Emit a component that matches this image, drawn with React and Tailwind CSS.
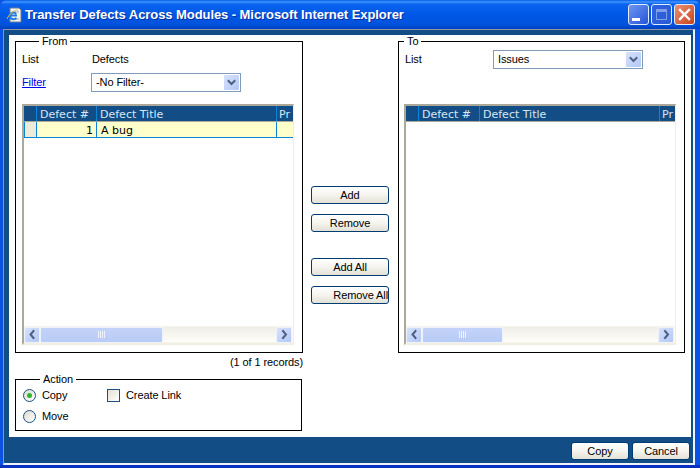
const body = "font-['Liberation_Sans',Arial,sans-serif] text-[11px] leading-[13px] text-black tracking-[-0.1px]";
const mono = "font-['DejaVu_Sans',Verdana,sans-serif] text-[11px] leading-[13px]";

function Chevron({ dir = "down" }) {
  const d = dir === "down" ? "M2.5 4 L5.5 7 L8.5 4" : dir === "left" ? "M6.5 2 L3.5 5.5 L6.5 9" : "M4 2 L7 5.5 L4 9";
  return (
    <svg width="11" height="11" viewBox="0 0 11 11" fill="none">
      <path d={d} stroke="#4d6185" strokeWidth="2" strokeLinecap="square" />
    </svg>
  );
}

function ScrollBtn({ dir }) {
  return (
    <div className="w-[16px] h-[16px] rounded-[2px] border border-[#eef2fd] bg-gradient-to-br from-[#d6e1fb] to-[#b4c8f6] flex items-center justify-center shrink-0">
      <Chevron dir={dir} />
    </div>
  );
}

function Select({ label }) {
  return (
    <div className="w-[150px] h-[19px] border border-[#7f9db9] bg-white flex items-center pl-[4px] pr-[1px]">
      <span className={`${body} flex-1`}>{label}</span>
      <div className="w-[15px] h-[15px] rounded-[1px] bg-gradient-to-br from-[#d6e1fb] to-[#b4c8f6] flex items-center justify-center">
        <Chevron />
      </div>
    </div>
  );
}

function Grid({ cols, row, thumb }) {
  const cell = "h-full shrink-0 border-r border-[#0a85d6] overflow-hidden whitespace-nowrap";
  return (
    <div className="w-[272px] h-[241px] border-t-2 border-l-2 border-b-2 border-r border-t-[#aca899] border-l-[#aca899] border-r-[#f1efe2] border-b-[#f1efe2] bg-white flex flex-col overflow-hidden">
      <div className={`${mono} h-[16px] bg-[#124d85] border-b border-[#aca899] flex text-[#d8e6f4] shrink-0`}>
        <div className={cell} style={{ width: cols[0] }} />
        <div className={`${cell} pl-[3px] pt-[2px]`} style={{ width: cols[1] }}>Defect #</div>
        <div className={`${cell} pl-[3px] pt-[2px]`} style={{ width: cols[2] }}>Defect Title</div>
        <div className="flex-1 pl-[2px] pt-[2px] overflow-hidden">Pr</div>
      </div>
      {row && (
        <div className={`${mono} h-[16px] bg-[#ffffcc] border-b border-[#0a85d6] flex text-black shrink-0`}>
          <div className="h-full shrink-0 bg-[#ecead8] border-r border-[#0a85d6] border-l border-l-[#0a85d6]" style={{ width: cols[0] }} />
          <div className={`${cell} pr-[3px] pt-[2px] text-right`} style={{ width: cols[1] }}>1</div>
          <div className={`${cell} pl-[4px] pt-[2px]`} style={{ width: cols[2] }}>A bug</div>
          <div className="flex-1" />
        </div>
      )}
      <div className="flex-1" />
      <div className="h-[17px] bg-[#fbfaf5] border-y border-[#f5f3ea] flex items-center pr-[1px] shrink-0">
        <ScrollBtn dir="left" />
        <div className="h-[16px] rounded-[2px] border border-[#eef2fd] bg-gradient-to-b from-[#c3d3f8] to-[#b8ccf6] flex items-center justify-center gap-[1px] shrink-0" style={{ width: thumb }}>
          {[0, 1, 2, 3].map((i) => <span key={i} className="w-[1px] h-[7px] bg-[#eef3fe]" />)}
        </div>
        <div className="flex-1 h-full bg-gradient-to-b from-[#efeee6] to-[#fdfdfa]" />
        <ScrollBtn dir="right" />
      </div>
    </div>
  );
}

function Btn({ children, className = "" }) {
  return (
    <button className={`${body} h-[18px] rounded-[3px] border border-[#003c74] bg-gradient-to-b from-[#ffffff] via-[#f5f4ee] to-[#e3e1d6] overflow-hidden whitespace-nowrap ${className}`}>
      {children}
    </button>
  );
}

function Radio({ on }) {
  return (
    <div className="w-[13px] h-[13px] rounded-full border border-[#1c5180] bg-gradient-to-br from-[#dcdad0] to-[#ffffff] flex items-center justify-center">
      {on && <div className="w-[5px] h-[5px] rounded-full bg-[#2fb52f]" />}
    </div>
  );
}

function WinBtn({ className = "", children }) {
  return (
    <div className={`w-[21px] h-[21px] rounded-[3px] border border-[#e4ecfb] flex items-center justify-center ${className}`}>
      {children}
    </div>
  );
}

function IEIcon() {
  return (
    <svg width="16" height="16" viewBox="0 0 16 16" className="shrink-0">
      <path d="M4 1 H13 L15 3 V15 H4 Z" fill="#f4f4ee" stroke="#6f7d92" strokeWidth="1" />
      <path d="M6 5 H13 M6 12 H13" stroke="#9fb0c8" strokeWidth="1" />
      <path d="M11 8.5 H4 C4 5.5 8.5 4.5 10 7 M4 9 C4 12.5 8.5 13 10.5 11" fill="none" stroke="#1f7de0" strokeWidth="2" />
      <path d="M1 12 C3 7 8 3 12 3" fill="none" stroke="#e6b84a" strokeWidth="1" />
    </svg>
  );
}

export default function App() {
  return (
    <div className="w-[700px] h-[468px] bg-[#0a52e2] border-b-[3px] border-[#0a30c0] overflow-hidden flex flex-col">
      <div className="h-[29px] shrink-0 rounded-t-[7px] bg-[linear-gradient(to_bottom,#0a5ce6_0,#3d95ff_2px,#0a64ee_4px,#0058e6_50%,#0052dc_85%,#0040c0_100%)] flex items-center pl-[6px] pr-[5px]">
        <IEIcon />
        <span className="ml-[3px] flex-1 font-['Liberation_Sans',Arial,sans-serif] font-bold text-[13px] leading-[16px] tracking-[-0.07px] text-white [text-shadow:1px_1px_#0b2f9c] whitespace-nowrap">
          Transfer Defects Across Modules - Microsoft Internet Explorer
        </span>
        <div className="flex gap-[2px]">
          <WinBtn className="bg-gradient-to-br from-[#6f95f0] to-[#2553d8] items-end pb-[3px] pr-[6px]">
            <div className="w-[8px] h-[3px] bg-white" />
          </WinBtn>
          <WinBtn className="bg-gradient-to-br from-[#2f62df] to-[#2a5bd6] border-[#6d92e8]">
            <div className="w-[11px] h-[11px] border border-[#7f9fe8] border-t-[3px]" />
          </WinBtn>
          <WinBtn className="bg-gradient-to-br from-[#ea9070] to-[#c8401c]">
            <svg width="13" height="13" viewBox="0 0 13 13">
              <path d="M2 2 L11 11 M11 2 L2 11" stroke="#fff" strokeWidth="2.4" strokeLinecap="square" />
            </svg>
          </WinBtn>
        </div>
      </div>

      <div className="flex-1 ml-[3px] mr-[5px] border-t border-[#8a98a8] border-l border-l-[#8a98a8] border-b-2 border-b-[#eef2fb] border-r-2 border-r-[#eef2fb] bg-[#124d85] flex flex-col pt-[5px] pl-[5px] pr-[2px] min-h-0">
        <div className="flex-1 bg-white flex pl-[6px] min-h-0">
          <div className="w-[288px] flex flex-col shrink-0">
            <fieldset className="h-[318px] border border-black pl-[6px]">
              <legend className={`${body} ml-[17px] px-[3px]`}>From</legend>
              <div className={`${body} h-[20px] flex items-center mt-[1px]`}>
                <span className="w-[70px]">List</span>
                <span>Defects</span>
              </div>
              <div className={`${body} h-[19px] mt-[4px] flex items-center`}>
                <a className="w-[69px] text-[#0000ee] underline">Filter</a>
                <Select label="-No Filter-" />
              </div>
              <div className="mt-[12px]">
                <Grid cols={[13, 60, 180]} row thumb={123} />
              </div>
            </fieldset>
            <div className={`${body} text-right mt-[3px] h-[13px]`}>(1 of 1 records)</div>
            <fieldset className="h-[58px] mt-[4px] w-[287px] border border-black pl-[7px]">
              <legend className={`${body} ml-[17px] px-[3px]`}>Action</legend>
              <div className={`${body} flex items-center h-[13px] mt-[3px]`}>
                <Radio on />
                <span className="ml-[6px] w-[65px]">Copy</span>
                <div className="w-[13px] h-[13px] border border-[#1c5180] bg-gradient-to-br from-[#e2e0d6] to-[#ffffff]" />
                <span className="ml-[6px]">Create Link</span>
              </div>
              <div className={`${body} flex items-center h-[13px] mt-[8px]`}>
                <Radio />
                <span className="ml-[6px]">Move</span>
              </div>
            </fieldset>
          </div>

          <div className="w-[78px] ml-[8px] mr-[9px] shrink-0 flex flex-col pt-[151px]">
            <Btn>Add</Btn>
            <Btn className="mt-[10px]">Remove</Btn>
            <Btn className="mt-[26px]">Add All</Btn>
            <Btn className="mt-[10px] text-right pl-[21px]">Remove All</Btn>
          </div>

          <div className="w-[287px] shrink-0">
            <fieldset className="h-[318px] border border-black pl-[6px]">
              <legend className={`${body} -ml-[1px] px-[3px]`}>To</legend>
              <div className={`${body} h-[19px] flex items-center mt-[2px]`}>
                <span className="w-[88px]">List</span>
                <Select label="Issues" />
              </div>
              <div className="mt-[35px] -ml-[1px]">
                <Grid cols={[13, 61, 180]} thumb={81} />
              </div>
            </fieldset>
          </div>
        </div>
        <div className="h-[26px] shrink-0 flex justify-end items-start pt-[5px] gap-[3px] pr-[1px]">
          <Btn className="w-[58px]">Copy</Btn>
          <Btn className="w-[58px]">Cancel</Btn>
        </div>
      </div>
    </div>
  );
}
